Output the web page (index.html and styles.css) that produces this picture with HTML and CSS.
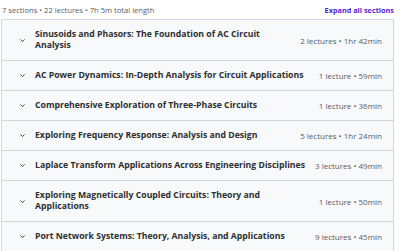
FILE: index.html
```html
<!DOCTYPE html>
<html lang="en">
<head>
    <meta charset="UTF-8">
    <meta name="viewport" content="width=device-width, initial-scale=1.0">
    <title>Course content</title>
    <link rel="stylesheet" href="styles.css">
</head>
<body>
    <div class="curriculum">
        <div class="summary">
            <span class="stats">7 sections • 22 lectures • 7h 5m total length</span>
            <button class="expand">Expand all sections</button>
        </div>
        <div class="sections">
            <div class="section">
                <svg class="chevron" viewBox="0 0 10 10"><path d="M2 3.5 L5 6.5 L8 3.5"/></svg>
                <span class="title">Sinusoids and Phasors: The Foundation of AC Circuit Analysis</span>
                <span class="meta">2 lectures • 1hr 42min</span>
            </div>
            <div class="section">
                <svg class="chevron" viewBox="0 0 10 10"><path d="M2 3.5 L5 6.5 L8 3.5"/></svg>
                <span class="title">AC Power Dynamics: In-Depth Analysis for Circuit Applications</span>
                <span class="meta">1 lecture • 59min</span>
            </div>
            <div class="section">
                <svg class="chevron" viewBox="0 0 10 10"><path d="M2 3.5 L5 6.5 L8 3.5"/></svg>
                <span class="title">Comprehensive Exploration of Three-Phase Circuits</span>
                <span class="meta">1 lecture • 36min</span>
            </div>
            <div class="section">
                <svg class="chevron" viewBox="0 0 10 10"><path d="M2 3.5 L5 6.5 L8 3.5"/></svg>
                <span class="title">Exploring Frequency Response: Analysis and Design</span>
                <span class="meta">5 lectures • 1hr 24min</span>
            </div>
            <div class="section">
                <svg class="chevron" viewBox="0 0 10 10"><path d="M2 3.5 L5 6.5 L8 3.5"/></svg>
                <span class="title">Laplace Transform Applications Across Engineering Disciplines</span>
                <span class="meta">3 lectures • 49min</span>
            </div>
            <div class="section">
                <svg class="chevron" viewBox="0 0 10 10"><path d="M2 3.5 L5 6.5 L8 3.5"/></svg>
                <span class="title">Exploring Magnetically Coupled Circuits: Theory and Applications</span>
                <span class="meta">1 lecture • 50min</span>
            </div>
            <div class="section">
                <svg class="chevron" viewBox="0 0 10 10"><path d="M2 3.5 L5 6.5 L8 3.5"/></svg>
                <span class="title">Port Network Systems: Theory, Analysis, and Applications</span>
                <span class="meta">9 lectures • 45min</span>
            </div>
        </div>
    </div>
</body>
</html>
```

FILE: styles.css
```css
body {
    margin: 0;
    padding: 0 6px 0 1px;
    font-family: "Open Sans", Arial, sans-serif;
    color: #2d2f31;
    background: #ffffff;
}
.summary {
    display: flex;
    justify-content: space-between;
    align-items: center;
    height: 19px;
    padding: 0 0 0 1px;
}
.stats {
    font-size: 7.6px;
    color: #595c5f;
}
.expand {
    border: none;
    background: none;
    padding: 0;
    font-family: inherit;
    font-size: 7.3px;
    font-weight: 700;
    color: #5624d0;
}
.sections {
    border: 1px solid #d1d7dc;
    border-bottom: none;
}
.section {
    display: flex;
    align-items: center;
    gap: 5px;
    padding: 9px 11px 9px 17px;
    line-height: 11px;
    background: #f7f9fa;
    border-bottom: 1px solid #d1d7dc;
}
.chevron {
    width: 7px;
    height: 7px;
    flex-shrink: 0;
    fill: none;
    stroke: #2d2f31;
    stroke-width: 1.3;
    margin-right: 4px;
}
.title {
    flex: 1;
    font-size: 8.7px;
    font-weight: 700;
}
.meta {
    flex-shrink: 0;
    font-size: 8px;
    color: #595c5f;
}
```
